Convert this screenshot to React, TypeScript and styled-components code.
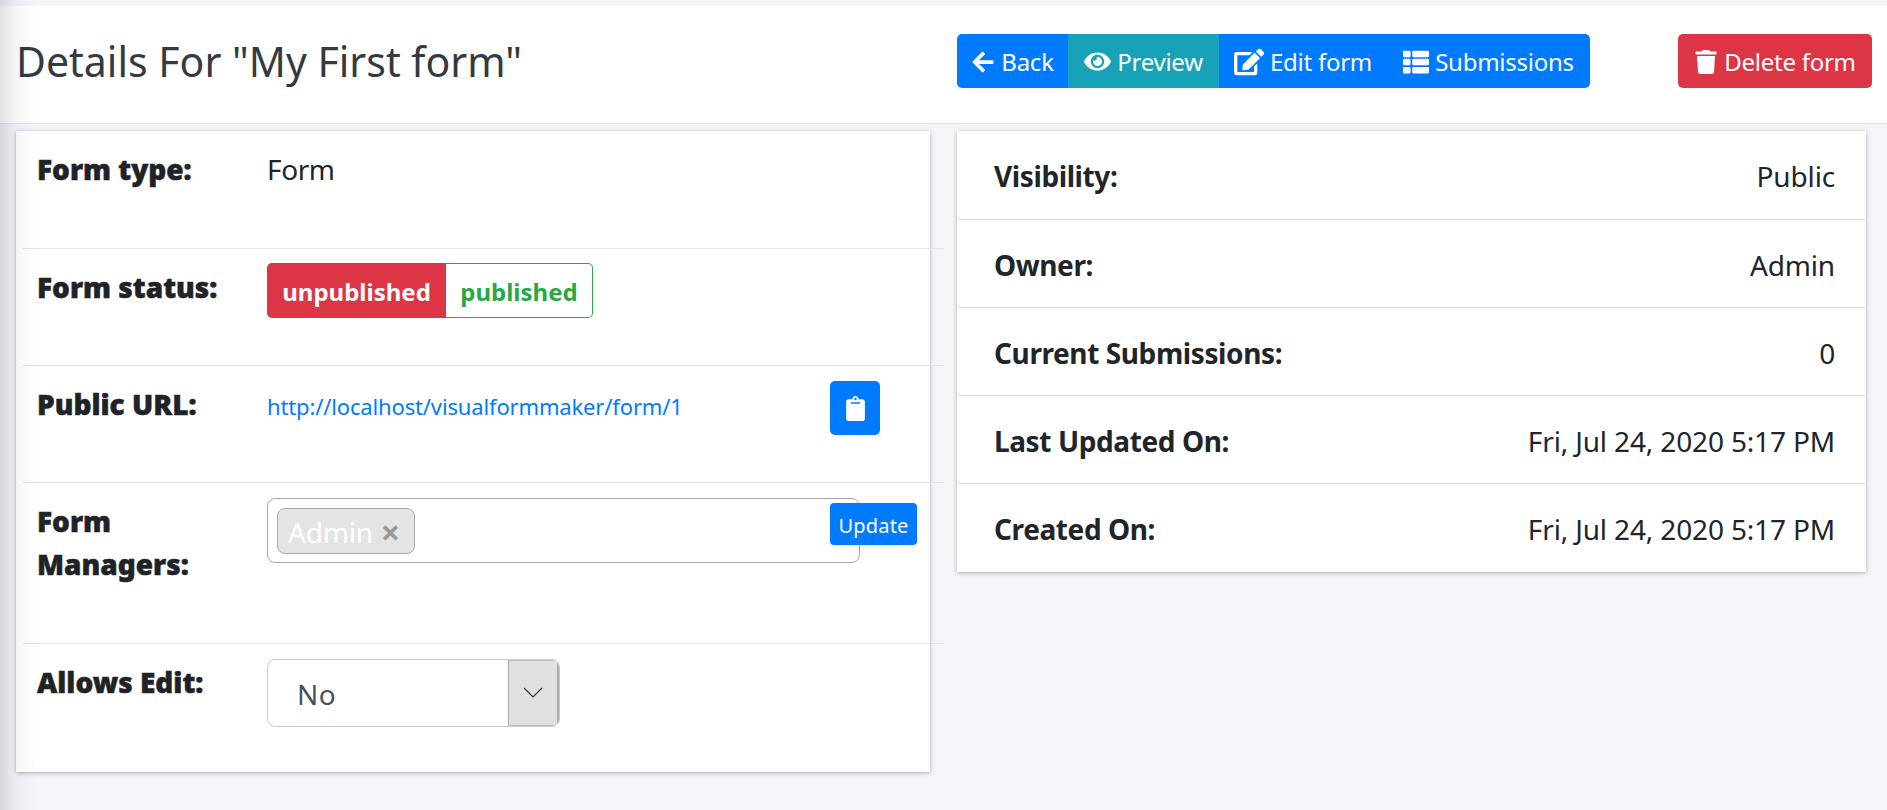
import React from 'react';
import styled, { createGlobalStyle } from 'styled-components';
import { FaArrowLeft, FaClipboard, FaEdit, FaEye, FaThList, FaTrash } from 'react-icons/fa';

const GlobalStyle = createGlobalStyle`
  html, body {
    margin: 0;
    height: 100%;
    overflow: hidden;
    background: #f4f5f9;
  }
  body {
    font-family: "Noto Sans", "Open Sans", sans-serif;
    color: #212529;
  }
  * { box-sizing: border-box; }
`;

const Page = styled.div`
  position: relative;
  height: 810px;
  padding-top: 6px;
`;

const SideShadow = styled.div`
  position: absolute;
  top: 0;
  left: 0;
  bottom: 0;
  width: 36px;
  pointer-events: none;
  background: linear-gradient(to right, rgba(0, 0, 0, 0.12), rgba(0, 0, 0, 0.04) 40%, rgba(0, 0, 0, 0));
`;

const Header = styled.header`
  display: flex;
  align-items: center;
  height: 118px;
  padding: 0 15px 8px 16px;
  background: #fff;
  border-bottom: 1px solid #dfe1e6;
`;

const Title = styled.h1`
  width: 941px;
  margin: 0;
  font-size: 41px;
  font-weight: 400;
  line-height: 48px;
  color: #343a40;
`;

const ButtonGroup = styled.div`
  display: flex;
  height: 54px;
  border-radius: 5px;
  overflow: hidden;
`;

const Button = styled.button<{ $bg?: string; $width: number }>`
  display: inline-flex;
  align-items: center;
  justify-content: center;
  gap: 6px;
  width: ${(p) => p.$width}px;
  height: 54px;
  padding: 2px 0 0;
  border: 0;
  font-family: inherit;
  font-size: 24px;
  letter-spacing: -0.25px;
  color: #fff;
  background: ${(p) => p.$bg ?? '#007bff'};
`;

const DeleteButton = styled(Button)`
  margin-left: auto;
  border-radius: 5px;
`;

const Content = styled.main`
  display: grid;
  grid-template-columns: 914px 909px;
  column-gap: 27px;
  align-items: start;
  padding: 7px 0 0 16px;
`;

const Card = styled.section`
  background: #fff;
  box-shadow: 0 1px 4px rgba(0, 0, 0, 0.3);
`;

const FormRow = styled.div<{ $height: number; $last?: boolean }>`
  display: grid;
  grid-template-columns: 229px 563px auto;
  height: ${(p) => p.$height}px;
  margin: 0 -14px 0 7px;
  padding: 15px 0 0 14px;
  border-bottom: ${(p) => (p.$last ? 'none' : '1px solid #e2e3e6')};
`;

const FormLabel = styled.div`
  margin-top: 2px;
  padding-right: 40px;
  font-size: 28px;
  font-weight: 900;
  line-height: 43px;
  -webkit-text-stroke: 0.5px #1f2327;
  color: #1f2327;
`;

const FormValue = styled.div`
  margin: 2px 0 0 1px;
  font-size: 28px;
  line-height: 43px;
  letter-spacing: -0.4px;
`;

const StatusToggle = styled.div`
  display: flex;
  width: 326px;
  height: 55px;
  margin: -1px 0 0 1px;
  font-size: 24px;
  font-weight: 700;
`;

const StatusOption = styled.div<{ $active?: boolean; $width: number }>`
  display: flex;
  align-items: center;
  justify-content: center;
  width: ${(p) => p.$width}px;
  padding-top: 2px;
  color: ${(p) => (p.$active ? '#fff' : '#28a745')};
  background: ${(p) => (p.$active ? '#dc3545' : '#fff')};
  border: ${(p) => (p.$active ? 'none' : '1px solid #28a745')};
  border-left: none;
  border-radius: ${(p) => (p.$active ? '5px 0 0 5px' : '0 5px 5px 0')};
`;

const UrlCell = styled.div`
  padding-left: 1px;
`;

const UrlLink = styled.a`
  font-size: 22px;
  line-height: 50px;
  letter-spacing: -0.15px;
  color: #007bff;
  text-decoration: none;
`;

const ClipButton = styled.button`
  display: flex;
  align-items: center;
  justify-content: center;
  width: 50px;
  height: 54px;
  margin-left: 1px;
  padding: 0;
  border: 0;
  border-radius: 5px;
  font-size: 25px;
  color: #fff;
  background: #007bff;
`;

const TagBox = styled.div`
  width: 593px;
  height: 65px;
  margin-left: 1px;
  padding: 9px;
  border: 1px solid #aaa;
  border-radius: 8px;
  background: #fff;
`;

const Tag = styled.span`
  display: inline-flex;
  align-items: center;
  gap: 8px;
  width: 138px;
  height: 46px;
  padding: 2px 0 0 10px;
  border: 1px solid #aaa;
  border-radius: 8px;
  font-size: 28px;
  letter-spacing: -0.2px;
  color: #fff;
  background: #e4e4e4;
`;

const TagRemove = styled.span`
  font-size: 34px;
  font-weight: 700;
  line-height: 1;
  color: #999;
`;

const UpdateButton = styled.button`
  position: relative;
  width: 87px;
  height: 42px;
  margin: 5px 0 0 1px;
  padding: 2px 0 0;
  border: 0;
  border-radius: 4px;
  font-family: inherit;
  font-size: 20px;
  letter-spacing: 0.2px;
  color: #fff;
  background: #007bff;
`;

const SelectBox = styled.div`
  display: flex;
  width: 293px;
  height: 68px;
  margin-left: 1px;
  border: 1px solid #ccc;
  border-radius: 8px;
  overflow: hidden;
  background: #fff;
`;

const SelectValue = styled.div`
  flex: 1;
  padding-left: 29px;
  font-size: 28px;
  line-height: 68px;
  letter-spacing: 0.5px;
  color: #495057;
`;

const SelectArrow = styled.div`
  display: flex;
  align-items: center;
  justify-content: center;
  width: 51px;
  border-left: 1px solid #aaa;
  border-top: 1px solid #bbb;
  border-bottom: 1px solid #bbb;
  border-right: 2px solid #aaa;
  background: #e0e0e0;
`;

const InfoRow = styled.div<{ $height: number; $last?: boolean }>`
  display: flex;
  justify-content: space-between;
  height: ${(p) => p.$height}px;
  padding: 27px 31px 0 37px;
  font-size: 28px;
  line-height: 36px;
  letter-spacing: -0.15px;
  border-bottom: ${(p) => (p.$last ? 'none' : '1px solid #dfe0e3')};
`;

const InfoLabel = styled.span`
  font-weight: 700;
  letter-spacing: -0.4px;
`;

const infoRows = [
  ['Visibility:', 'Public'],
  ['Owner:', 'Admin'],
  ['Current Submissions:', '0'],
  ['Last Updated On:', 'Fri, Jul 24, 2020 5:17 PM'],
  ['Created On:', 'Fri, Jul 24, 2020 5:17 PM'],
];

export default function App() {
  return (
    <Page>
      <GlobalStyle />
      <Header>
        <Title>Details For "My First form"</Title>
        <ButtonGroup>
          <Button $width={111}><FaArrowLeft size={24} /> Back</Button>
          <Button $width={151} $bg="#17a2b8"><FaEye size={27} /> Preview</Button>
          <Button $width={168}><FaEdit size={30} /> Edit form</Button>
          <Button $width={203}><FaThList size={26} /> Submissions</Button>
        </ButtonGroup>
        <DeleteButton $width={194} $bg="#dc3545"><FaTrash size={24} /> Delete form</DeleteButton>
      </Header>
      <Content>
        <Card>
          <FormRow $height={118}>
            <FormLabel>Form type:</FormLabel>
            <FormValue>Form</FormValue>
          </FormRow>
          <FormRow $height={117}>
            <FormLabel>Form status:</FormLabel>
            <StatusToggle>
              <StatusOption $active $width={179}>unpublished</StatusOption>
              <StatusOption $width={147}>published</StatusOption>
            </StatusToggle>
          </FormRow>
          <FormRow $height={117}>
            <FormLabel>Public URL:</FormLabel>
            <UrlCell><UrlLink href="#">http://localhost/visualformmaker/form/1</UrlLink></UrlCell>
            <ClipButton aria-label="Copy"><FaClipboard /></ClipButton>
          </FormRow>
          <FormRow $height={161}>
            <FormLabel>Form Managers:</FormLabel>
            <TagBox>
              <Tag>Admin <TagRemove>×</TagRemove></Tag>
            </TagBox>
            <UpdateButton>Update</UpdateButton>
          </FormRow>
          <FormRow $height={128} $last>
            <FormLabel>Allows Edit:</FormLabel>
            <SelectBox>
              <SelectValue>No</SelectValue>
              <SelectArrow>
                <svg width="20" height="12" viewBox="0 0 20 12" fill="none" stroke="#333" strokeWidth="1.2">
                  <path d="M1 1l9 9 9-9" />
                </svg>
              </SelectArrow>
            </SelectBox>
          </FormRow>
        </Card>
        <Card>
          {infoRows.map(([label, value], i) => (
            <InfoRow key={label} $height={i === 0 ? 89 : 88} $last={i === infoRows.length - 1}>
              <InfoLabel>{label}</InfoLabel>
              <span>{value}</span>
            </InfoRow>
          ))}
        </Card>
      </Content>
      <SideShadow />
    </Page>
  );
}
